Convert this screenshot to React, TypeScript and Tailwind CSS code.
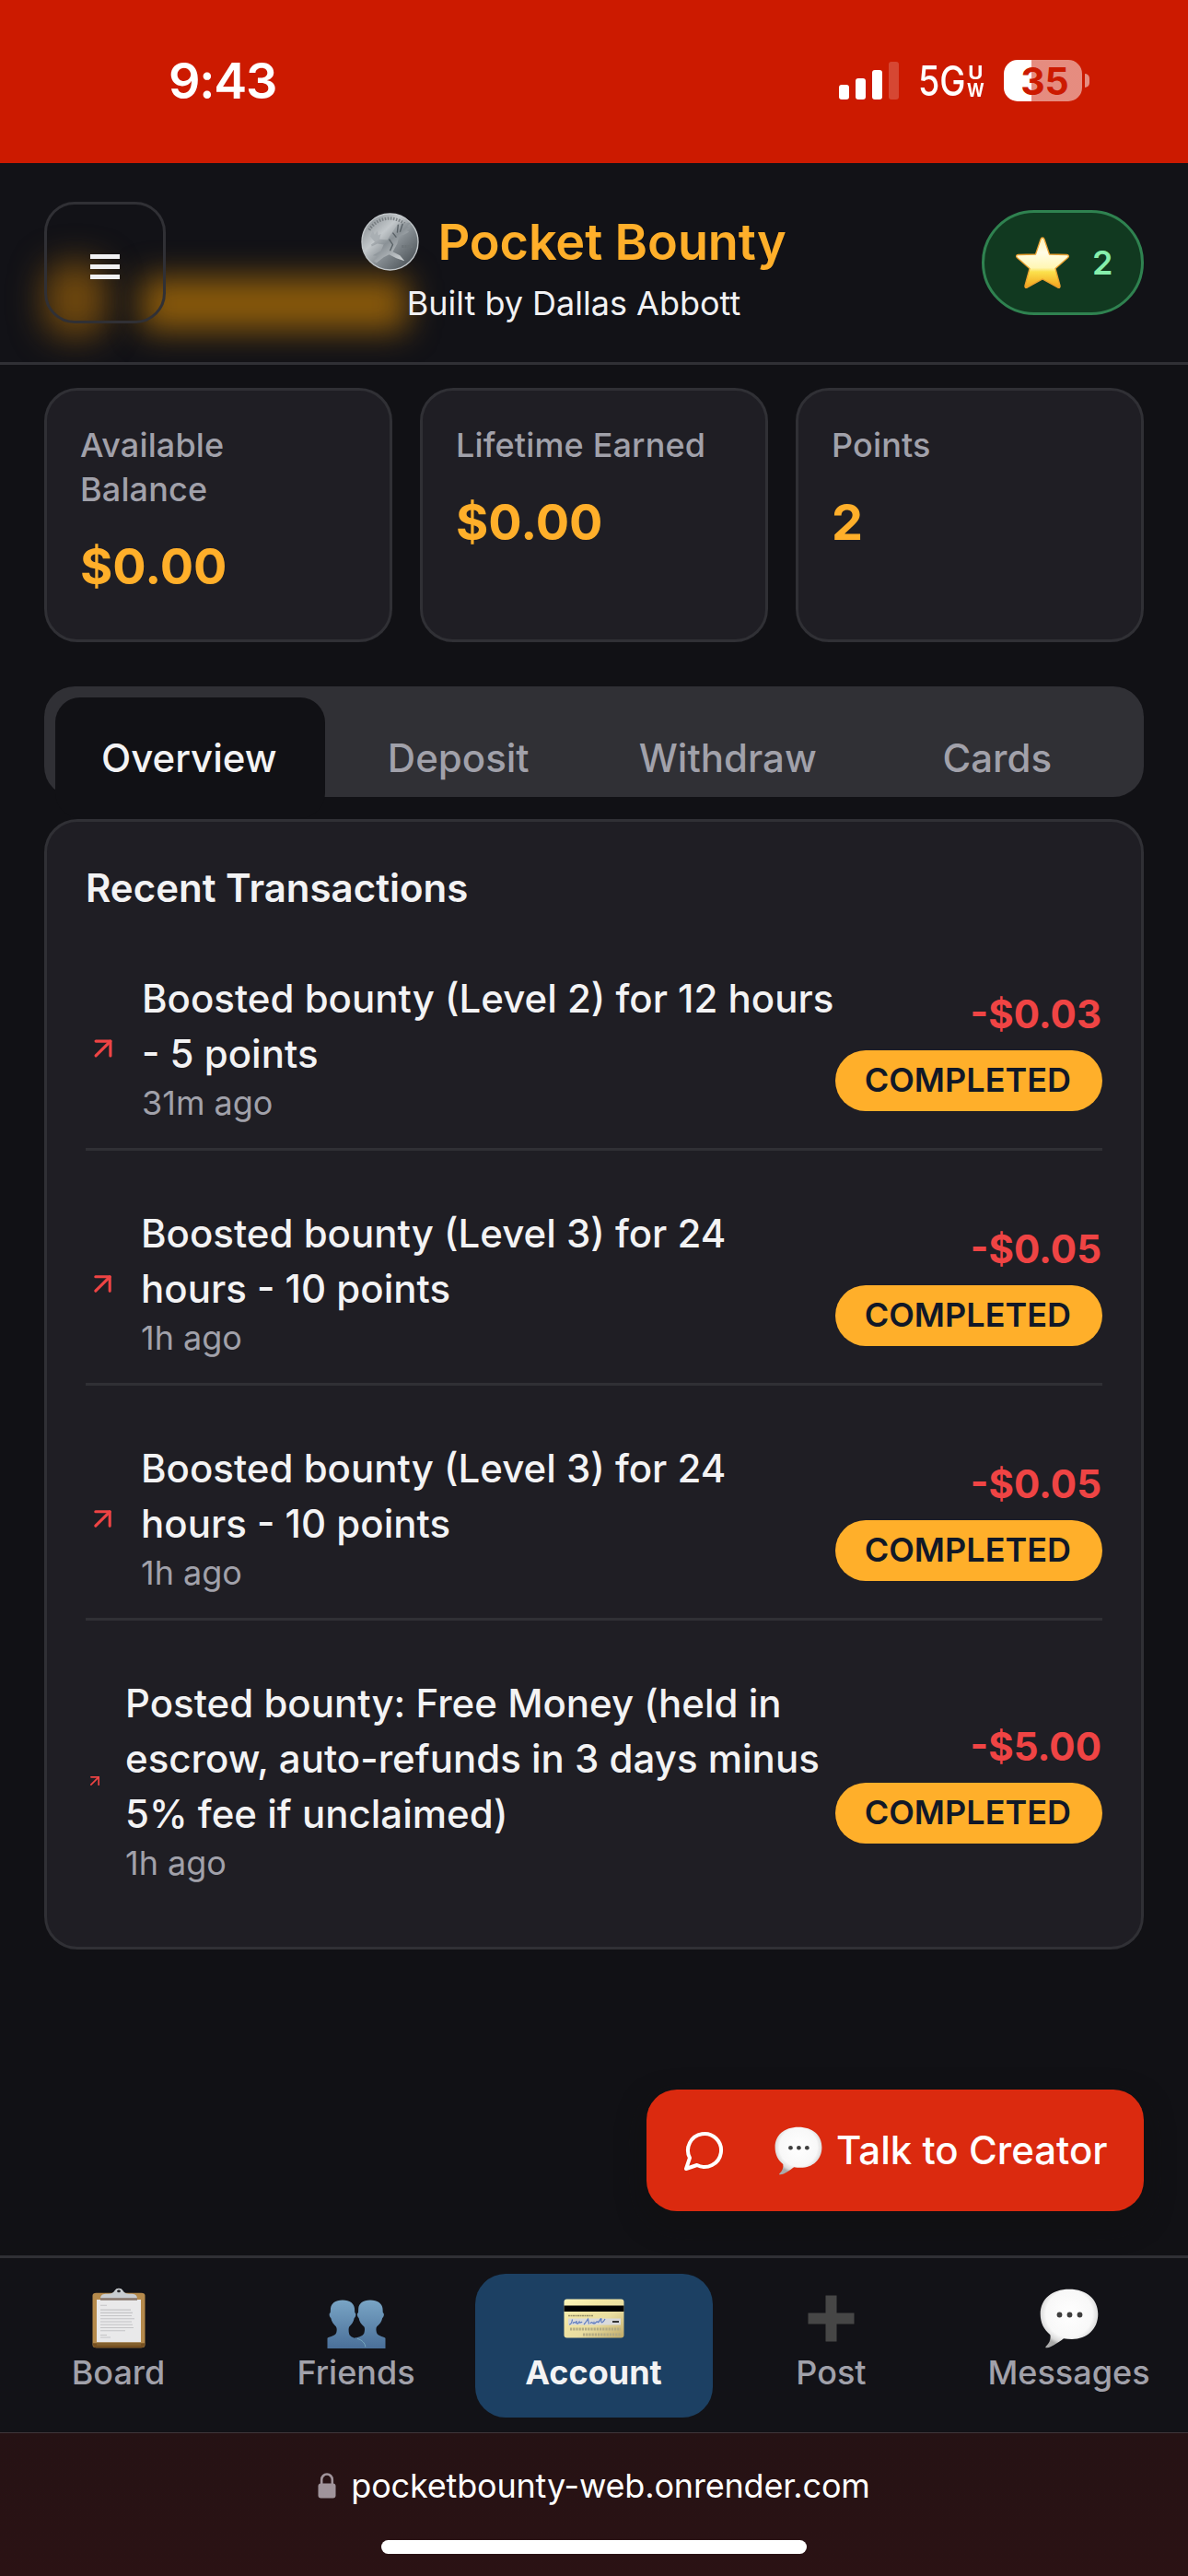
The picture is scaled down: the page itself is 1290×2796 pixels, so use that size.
import React from "react";

function StatusBar() {
  return (
    <div className="flex h-[177px] shrink-0 items-start justify-between bg-[#cc1a00] pr-[107px] pl-[183px] text-white">
      <div className="mt-[55px] text-[54px] leading-[66px] font-semibold tracking-[-1.2px]">9:43</div>
      <div className="mt-16 flex h-[46px] items-center">
        <div className="flex h-[41px] items-end gap-[7px]">
          <div className="h-[16px] w-[11px] rounded-[3px] bg-white" />
          <div className="h-[23px] w-[11px] rounded-[3px] bg-white" />
          <div className="h-[32px] w-[11px] rounded-[3px] bg-white" />
          <div className="h-[41px] w-[11px] rounded-[3px] bg-white/20" />
        </div>
        <div className="ml-[21px] flex w-[72px] items-center">
          <span className="w-[53px] origin-left scale-x-[0.84] pt-[2px] text-[45px] leading-[46px] font-medium whitespace-nowrap">5G</span>
          <span className="flex w-[19px] flex-col items-center pt-[3px] text-[20px] leading-[19px] font-bold">
            <span className="scale-x-110">U</span>
            <span className="scale-x-90">W</span>
          </span>
        </div>
        <div className="ml-[21px] flex items-center gap-[3px]">
          <div className="relative h-[45px] w-[85px] rounded-[15px] bg-linear-to-r from-white from-[35.300%] to-white/50 to-[35.300%]">
            <span className="absolute inset-0 pl-1 text-center text-[41px] leading-[46px] font-bold text-[#cc1a00]">35</span>
          </div>
          <div className="h-[15px] w-[5px] rounded-r-full bg-white/50" />
        </div>
      </div>
    </div>
  );
}

function Coin() {
  return (
    <svg viewBox="0 0 64 64" className="h-[63px] w-[63px]">
      <defs>
        <linearGradient id="coin" x1="0.1" y1="0.1" x2="0.9" y2="0.9">
          <stop offset="0" stopColor="#8d9397" />
          <stop offset="0.32" stopColor="#c3c8cb" />
          <stop offset="0.6" stopColor="#858c91" />
          <stop offset="1" stopColor="#4c5358" />
        </linearGradient>
        <linearGradient id="eagle" x1="0" y1="0" x2="0.8" y2="1">
          <stop offset="0" stopColor="#e3e6e8" />
          <stop offset="0.5" stopColor="#8a9196" />
          <stop offset="1" stopColor="#d4d8da" />
        </linearGradient>
      </defs>
      <circle cx="32" cy="32" r="31" fill="url(#coin)" stroke="#c2c7ca" strokeWidth="1.4" />
      <path d="M9 19A26 26 0 0 1 50 14" fill="none" stroke="#6b7276" strokeWidth="3.4" strokeDasharray="1.6 1.5" opacity="0.8" />
      <path d="M45 37h12" stroke="#6d7478" strokeWidth="3" strokeDasharray="2.2 1" />
      <path d="M10 26l3-6 2 4 3-4 1 5 3-2-2 8-4 2z" fill="#a9afb3" />
      <path d="M11 35l9-6 9 1 5-8 7-10 14-1-4 4 4 1-5 3 3 2-6 3-5 1-2 9-5 9 8 4 5 6-9-3-8-4-6 3-8 6-3-2 5-5-6-1 9-5 3-7-7-1-6 3z" fill="url(#eagle)" />
      <path d="M35 22l4 5M31 29l4 6-3 7M41 13l-1 9M46 12l-3 9" stroke="#596166" strokeWidth="1.4" fill="none" />
    </svg>
  );
}

function Star() {
  return (
    <svg viewBox="0 0 60 58" className="h-[58px] w-[60px]">
      <defs>
        <linearGradient id="star" x1="0" y1="0" x2="0" y2="1">
          <stop offset="0" stopColor="#fff3b8" />
          <stop offset="0.3" stopColor="#fffde6" />
          <stop offset="0.6" stopColor="#fff6b4" />
          <stop offset="0.68" stopColor="#fbe14d" />
          <stop offset="1" stopColor="#f3a21a" />
        </linearGradient>
      </defs>
      <path
        d="M30 2c1 0 1.600.6 2 1.800L37.500 20 56.500 20.500c2 .1 2.600 1.900 1 3.200L44 35.500 49 54c.5 2-.9 3-2.600 1.900L30 47 13.600 55.900C11.900 57 10.500 56 11 54L16 35.500 2.500 23.700c-1.600-1.300-1-3.100 1-3.200L22.500 20 28 3.800C28.400 2.600 29 2 30 2z"
        fill="url(#star)"
        stroke="#eaa030"
        strokeWidth="1.300"
      />
    </svg>
  );
}

function Speech({ className }: { className: string }) {
  return (
    <svg viewBox="0 0 64 65" className={className}>
      <defs>
        <radialGradient id="speech" cx="0.5" cy="0.42" r="0.56">
          <stop offset="0" stopColor="#ffffff" />
          <stop offset="0.72" stopColor="#f8f8f8" />
          <stop offset="0.9" stopColor="#dadada" />
          <stop offset="1" stopColor="#aaaaaa" />
        </radialGradient>
      </defs>
      <path d="M32 .8C51 .8 63.300 11.500 63.300 27.800S51 55 35 55c-3.200 0-6.200-.2-9-.8C20 58.500 13.500 63.500 8 64.300c-2 .3-2.200-.8-.8-2C10.500 59 12.300 55 11.400 50.200 4.800 45 .7 37.500.7 27.800.7 11.500 13 .8 32 .8z" fill="url(#speech)" />
      <circle cx="21.500" cy="28.500" r="2.900" fill="#3f3f3f" />
      <circle cx="32.500" cy="28.500" r="2.900" fill="#3f3f3f" />
      <circle cx="43.500" cy="28.500" r="2.900" fill="#3f3f3f" />
    </svg>
  );
}

function Header() {
  return (
    <header className="relative flex h-[219px] shrink-0 items-center justify-between border-b-[3px] border-[#303035] bg-[#121217] px-12">
      <div className="pointer-events-none absolute inset-0 overflow-hidden">
        <div className="absolute top-[108px] left-[48px] h-[80px] w-[68px] rounded-[24px] bg-[#6f480e] blur-[18px]" />
        <div className="absolute top-[124px] left-[154px] h-[58px] w-[288px] rounded-[8px] bg-[#8a5a0b] blur-[17px]" />
      </div>
      <button className="relative flex h-[132px] w-[132px] flex-col items-center justify-center gap-[6px] rounded-[33px] border-[3px] border-[#303035] pt-[9px]">
        <span className="h-[5px] w-8 bg-[#f1f1f3]" />
        <span className="h-[5px] w-8 bg-[#f1f1f3]" />
        <span className="h-[5px] w-8 bg-[#f1f1f3]" />
      </button>
      <div className="relative flex flex-col items-center">
        <div className="flex h-[88px] items-center gap-[20px]">
          <Coin />
          <h1 className="text-[54px] leading-[88px] font-semibold tracking-[-0.1px] whitespace-nowrap text-[#ffaf2a]">Pocket Bounty</h1>
        </div>
        <p className="text-[36px] leading-[45px] whitespace-nowrap text-[#f1f1f3]">Built by Dallas Abbott</p>
      </div>
      <div className="relative flex h-[114px] w-[176px] items-center rounded-full border-[3px] border-[#2f8250] bg-[#113920] pl-[33px]">
        <Star />
        <span className="ml-6 text-[36px] leading-[46px] font-semibold text-[#86efac]">2</span>
      </div>
    </header>
  );
}

function Stat({ label, value }: { label: React.ReactNode; value: string }) {
  return (
    <div className="flex h-[276px] flex-1 flex-col rounded-[36px] border-[3px] border-[#303035] bg-[#1f1e24] px-9 pt-[35px]">
      <div className="text-[36px] leading-[48px] font-medium tracking-[0.15px] whitespace-nowrap text-[#a1a1aa]">{label}</div>
      <div className="mt-6 text-[54px] leading-[72px] font-bold text-[#ffaf2a]">{value}</div>
    </div>
  );
}

function Tabs() {
  const tabs = ["Overview", "Deposit", "Withdraw", "Cards"];
  return (
    <div className="flex h-[120px] items-start rounded-[33px] bg-[#303035] px-3 pt-3">
      {tabs.map((tab, i) => (
        <div
          key={tab}
          className={
            i === 0
              ? "flex h-[131px] flex-1 items-center justify-center rounded-[27px] bg-[#111115] pr-[2px] text-[42px] font-medium text-[#f3f3f4]"
              : "flex h-[131px] flex-1 items-center justify-center pr-[2px] text-[42px] font-medium text-[#a1a1aa]"
          }
        >
          {tab}
        </div>
      ))}
    </div>
  );
}

type Transaction = { lines: string[]; time: string; amount: string; iconSize: number };

const transactions: Transaction[] = [
  { lines: ["Boosted bounty (Level 2) for 12 hours", "- 5 points"], time: "31m ago", amount: "-$0.03", iconSize: 38 },
  { lines: ["Boosted bounty (Level 3) for 24", "hours - 10 points"], time: "1h ago", amount: "-$0.05", iconSize: 37 },
  { lines: ["Boosted bounty (Level 3) for 24", "hours - 10 points"], time: "1h ago", amount: "-$0.05", iconSize: 37 },
  {
    lines: ["Posted bounty: Free Money (held in", "escrow, auto-refunds in 3 days minus", "5% fee if unclaimed)"],
    time: "1h ago",
    amount: "-$5.00",
    iconSize: 20,
  },
];

function TransactionRow({ tx }: { tx: Transaction }) {
  return (
    <div className="flex items-center border-b-[3px] border-[#303035] py-6 last:border-b-0">
      <svg
        viewBox="0 0 24 24"
        width={tx.iconSize}
        height={tx.iconSize}
        className="mr-[23px] shrink-0"
        fill="none"
        stroke="#ef4444"
        strokeWidth="2"
        strokeLinecap="round"
        strokeLinejoin="round"
      >
        <path d="M7 7h10v10" />
        <path d="M7 17 17 7" />
      </svg>
      <div className="w-0 flex-1 whitespace-nowrap">
        {tx.lines.map((line) => (
          <div key={line} className="text-[42px] leading-[60px] font-medium text-[#f3f3f4]">
            {line}
          </div>
        ))}
        <div className="pb-[2px] text-[36px] leading-[46px] text-[#a1a1aa]">{tx.time}</div>
      </div>
      <div className="flex w-[290px] shrink-0 flex-col items-end">
        <div className="h-[69px] pr-px text-[42px] leading-[60px] font-bold text-[#ef4444]">{tx.amount}</div>
        <div className="flex h-[66px] items-center rounded-full bg-[#ffaf2a] pr-[34px] pb-[2px] pl-[32px] text-[36px] leading-[48px] font-semibold text-[#111827]">
          COMPLETED
        </div>
      </div>
    </div>
  );
}

function Board() {
  return (
    <svg viewBox="0 0 58 82" preserveAspectRatio="none" className="h-[66px] w-[58px]">
      <rect x="0.500" y="7" width="57" height="74" rx="4" fill="#b58a4c" />
      <path d="M1 75h56v2a4 4 0 0 1-4 4H5a4 4 0 0 1-4-4z" fill="#765021" />
      <path d="M5 16h48v58H5z" fill="#e9e9ea" />
      <path d="M5 74h48v4H5z" fill="#83602f" />
      <path d="M9 24h7M9 30h33M9 34h35M9 38h34M9 42h37M9 46h34M9 50h35M9 54h36M9 58h27M9 64h7M9 67h11" stroke="#c4c4c6" strokeWidth="1.300" />
      <path d="M9 15c0-5 3-6.500 7-6.500 6 0 7-2 8.500-4.500C25.500 1.800 27 .8 29 .8s3.500 1 4.500 3.200C35 6.500 36 8.500 42 8.500c4 0 7 1.500 7 6.500z" fill="#c9cdd1" />
      <circle cx="29" cy="4.600" r="1.900" fill="#26262a" />
      <path d="M9 14h40v3H9z" fill="#85746a" />
    </svg>
  );
}

function Friends() {
  return (
    <svg viewBox="0 0 64 65" preserveAspectRatio="none" className="h-[53px] w-[64px]">
      <defs>
        <linearGradient id="people" x1="0" y1="0" x2="0" y2="1">
          <stop offset="0" stopColor="#79a5c5" />
          <stop offset="1" stopColor="#4a6f99" />
        </linearGradient>
      </defs>
      <path d="M47 .5c8 0 13 4.500 13.500 11.500.1 2 .2 4 .3 5.500 1.600.5 1.400 5-.6 7-.7 5-3 8-6 11.500-1 1.500-1 5-.2 8 1.500 5.500 9.500 5 9.500 7.500V65H30V51c6-1.500 9.500-3 10.500-7 .7-3 .8-6.500-.3-8-3-3.500-5-6.500-5.600-11.500-2-2-2.200-6.500-.6-7 .1-1.500.1-3.500.2-5.500C34.500 5 39 .5 47 .5z" fill="url(#people)" />
      <path d="M17 .5C9 .5 4.500 5 4 12c-.1 2-.2 4-.3 5.500-1.600.5-1.400 5 .6 7 .7 5 3 8 5.500 11.500 1 1.500 1.200 5 .4 8C8.700 49.500.5 49 .5 51.500V65H42c0-6-1.500-9.500-7-12-5-1.500-9.500-3-10.800-7-.9-4-.8-8.500.2-10 2.600-3.500 4.600-6.500 5.300-11.500 2-2 2.200-6.500.6-7-.1-1.500-.2-3.500-.3-5.500C29.500 5 25 .5 17 .5z" fill="url(#people)" />
      <path d="M33 52c5 1.500 8.500 6 8.800 11" stroke="#79abc0" strokeWidth="1" fill="none" />
    </svg>
  );
}

function Card() {
  return (
    <svg viewBox="0 0 66 43" className="h-[43px] w-[66px]">
      <defs>
        <linearGradient id="card" x1="0" y1="0" x2="1" y2="1">
          <stop offset="0" stopColor="#fdf6b8" />
          <stop offset="0.350" stopColor="#f1e5a3" />
          <stop offset="0.600" stopColor="#e9dda0" />
          <stop offset="1" stopColor="#bfa967" />
        </linearGradient>
      </defs>
      <rect x="0.500" y="0.500" width="65" height="42" rx="3" fill="url(#card)" />
      <path d="M.5 7.500h65v6.500H.5z" fill="#000" />
      <path d="M5 18.500h27" stroke="#968f66" strokeWidth="1.400" strokeDasharray="2 .5" />
      <path d="M5 21.500h57v7H5z" fill="#d9dadb" />
      <path d="M6 28c2 0 3-2 3.500-5.500M10 27c2-4 3 2 4-3 0 5 2 3 3 1 1 3 2-1 3 1M22 28c2-2 3-4 4.500-6l1 5.500M29 27c2-4 3 2 4-1 1 3 2-2 4-1 1 3 3-5 4-3-1 6 2 4 4 0" stroke="#5d7bc0" strokeWidth="1.200" fill="none" />
      <path d="M53 25h7" stroke="#333" strokeWidth="2" />
      <path d="M7 33h55M21 39h41" stroke="#b3ab83" strokeWidth="3" strokeDasharray="2.200 1" />
    </svg>
  );
}

function Plus() {
  return (
    <svg viewBox="0 0 51 51" className="h-[51px] w-[51px]">
      <path d="M19.500.5h12v19h19v12h-19v19h-12v-19H.5v-12h19z" fill="#464646" />
    </svg>
  );
}

function BottomNav() {
  const items: { label: string; icon: React.ReactNode; active?: boolean }[] = [
    { label: "Board", icon: <Board /> },
    { label: "Friends", icon: <Friends /> },
    { label: "Account", icon: <Card />, active: true },
    { label: "Post", icon: <div className="pb-[7px]"><Plus /></div> },
    { label: "Messages", icon: <Speech className="h-[65px] w-[64px]" /> },
  ];
  return (
    <nav className="flex h-[192px] shrink-0 border-t-[3px] border-[#303035] bg-[#121217] pt-[17px]">
      {items.map((item) => (
        <div
          key={item.label}
          className={
            item.active
              ? "flex h-[156px] w-[258px] flex-col items-center rounded-[33px] bg-[#1c4063] pr-px text-[#f3f3f4]"
              : "flex h-[156px] w-[258px] flex-col items-center pr-px text-[#a1a1aa]"
          }
        >
          <div className={item.active ? "flex h-[70px] items-end" : "flex h-[81px] items-end"}>{item.icon}</div>
          <span
            className={
              item.active
                ? "mt-[13px] text-[36px] leading-[48px] font-bold"
                : "mt-[2px] text-[36px] leading-[48px] font-medium"
            }
          >
            {item.label}
          </span>
        </div>
      ))}
    </nav>
  );
}

function BrowserBar() {
  return (
    <div className="flex h-[156px] shrink-0 flex-col items-center border-t border-[#40363a] bg-linear-to-b from-[#251214] to-[#2b1214]">
      <div className="mt-[33px] flex h-[48px] items-center gap-[16px]">
        <svg viewBox="0 0 20 28" className="h-7 w-5">
          <rect x="0.500" y="11.500" width="19" height="16" rx="3" fill="#a0949b" />
          <path d="M4.200 13V7.500a5.800 6 0 0 1 11.600 0V13" fill="none" stroke="#a0949b" strokeWidth="2.600" />
        </svg>
        <span className="text-[36px] leading-[48px] tracking-[-0.180px] text-white">pocketbounty-web.onrender.com</span>
      </div>
      <div className="mt-[35px] h-[15px] w-[462px] rounded-full bg-white" />
    </div>
  );
}

export default function App() {
  return (
    <div className="flex h-[2796px] w-[1290px] flex-col overflow-hidden bg-[#111115] font-['Inter',sans-serif]">
      <StatusBar />
      <Header />
      <main className="flex flex-1 flex-col px-12 pt-[25px]">
        <section className="flex gap-[30px]">
          <Stat label={<>Available<br />Balance</>} value="$0.00" />
          <Stat label="Lifetime Earned" value="$0.00" />
          <Stat label="Points" value="2" />
        </section>
        <div className="mt-12">
          <Tabs />
        </div>
        <section className="mt-6 flex flex-col rounded-[36px] border-[3px] border-[#303035] bg-[#1f1e24] p-[42px]">
          <h2 className="text-[42px] leading-[60px] font-semibold text-[#f3f3f4]">Recent Transactions</h2>
          <div className="mt-9 flex flex-col gap-9">
            {transactions.map((tx, i) => (
              <TransactionRow key={i} tx={tx} />
            ))}
          </div>
        </section>
        <button className="mt-auto mb-12 flex h-[132px] w-[540px] items-center self-end rounded-[33px] bg-[#db2a0f] pl-[39px] text-white shadow-[0_12px_30px_rgba(16,16,16,0.6)]">
          <svg viewBox="0 0 24 24" className="h-12 w-12" fill="none" stroke="currentColor" strokeWidth="2" strokeLinecap="round" strokeLinejoin="round">
            <path d="M7.900 20A9 9 0 1 0 4 16.100L2 22Z" />
          </svg>
          <Speech className="ml-[52px] h-[53px] w-[52px]" />
          <span className="ml-[15px] text-[42px] leading-[60px] font-medium whitespace-nowrap">Talk to Creator</span>
        </button>
      </main>
      <BottomNav />
      <BrowserBar />
    </div>
  );
}
